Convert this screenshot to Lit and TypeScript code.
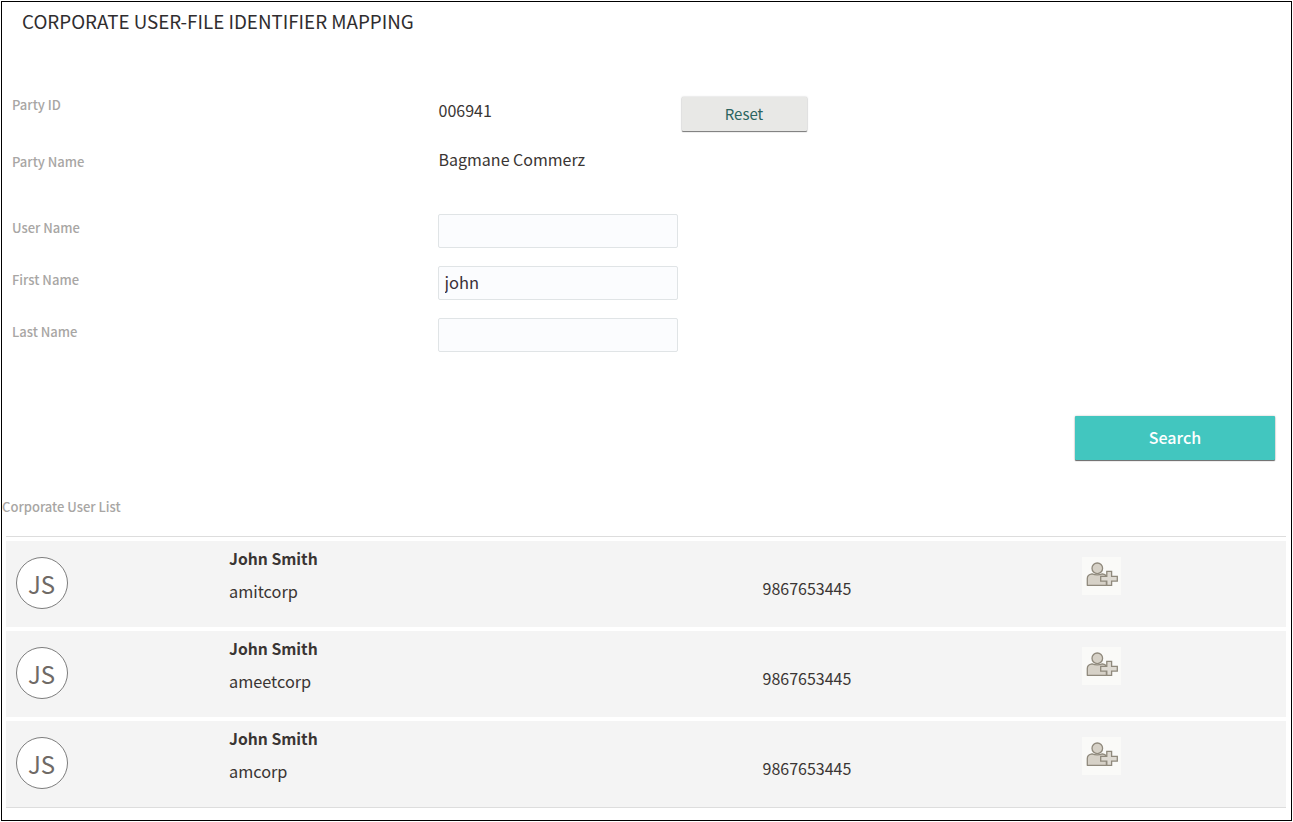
import { LitElement, html, css, svg } from 'lit';
import { customElement } from 'lit/decorators.js';

const users = [
  { name: 'John Smith', login: 'amitcorp', phone: '9867653445' },
  { name: 'John Smith', login: 'ameetcorp', phone: '9867653445' },
  { name: 'John Smith', login: 'amcorp', phone: '9867653445' },
];

const addUserIcon = svg`
  <svg class="add-icon" viewBox="0 0 39 38" width="39" height="38">
    <circle cx="15.300" cy="11.300" r="5.300" fill="#d6d1c7" stroke="#8f897c" stroke-width="1.300"></circle>
    <path d="M5.300 28.300v-6.800c0-2.600 2-4.300 4.700-4.700 3.400 1.300 7 1.300 10.400 0 1.800.3 3.100 1 4 2.200v9.300z" fill="#d6d1c7" stroke="#8f897c" stroke-width="1.300" stroke-linejoin="round"></path>
    <path d="M24.800 14.300h4.800v5h5.700v4.800h-5.700v4.200h-4.800v-4.200h-6.100v-4.800h6.100z" fill="#dedad2" stroke="#8f897c" stroke-width="1.300"></path>
  </svg>`;

@customElement('app-root')
export class AppRoot extends LitElement {
  static styles = css`
    :host {
      display: block;
      font-family: "Noto Sans CJK SC", "Source Sans Pro", "Noto Sans", sans-serif;
      color: #3a3533;
    }

    .frame {
      box-sizing: border-box;
      width: 1291px;
      height: 820px;
      margin: 1px 0 0 1px;
      border: 1px solid #000;
      background: #fff;
    }

    .title {
      margin: 0;
      padding: 4px 0 0 20px;
      height: 29px;
      font-size: 18.800px;
      line-height: 29px;
      font-weight: 400;
      color: #2f2d2f;
    }

    .form {
      display: grid;
      grid-template-columns: 436px 243px 126px;
      padding-top: 58px;
    }

    .label {
      padding-left: 10px;
      font-size: 13px;
      line-height: 20px;
      font-weight: 500;
      color: #a8a6a4;
    }

    .value {
      padding-left: 0.500px;
      font-size: 16px;
      line-height: 24px;
    }

    .reset {
      box-sizing: border-box;
      display: block;
      width: 125px;
      height: 34px;
      margin: 4px 0 0 1px;
      padding: 0 1px 2px 0;
      border: 0;
      border-radius: 1px;
      background: #e8e8e6;
      box-shadow: 0 1px 1px #777, 0 0 2px #bbb;
      font: inherit;
      font-size: 15px;
      color: #2b6460;
    }

    .party-id { height: 57px; }
    .party-id .label { margin-top: 2px; }
    .party-id .value { margin-top: 5px; }
    .party-name { height: 64px; }
    .party-name .label { margin-top: 2px; }
    .party-name .value { margin-top: -3px; }

    .row { display: contents; }
    .field-row .label { margin-top: 4px; }
    .field-row .cell { height: 52px; }

    .input {
      box-sizing: border-box;
      display: block;
      width: 240px;
      height: 34px;
      padding: 0 5.500px 2px;
      border: 1px solid #e0e4e6;
      border-radius: 2px;
      background: #fbfcfe;
      font: inherit;
      font-size: 16.500px;
      color: #3a3039;
      outline: none;
    }

    .actions {
      display: flex;
      justify-content: flex-end;
      padding: 46px 16px 0 0;
    }

    .search {
      width: 200px;
      height: 44px;
      padding: 0 0 2px;
      border: 0;
      border-radius: 1px;
      background: #42c6bf;
      box-shadow: 0 1px 1px #666, 0 0 2px #bbb;
      font: inherit;
      font-size: 16px;
      font-weight: 500;
      color: #fff;
    }

    .list-title {
      margin: 0;
      padding-top: 37px;
      font-size: 13px;
      line-height: 20px;
      font-weight: 500;
      color: #a8a6a4;
    }

    .list {
      margin: 19px 5px 0 4px;
      border-top: 1px solid #dddddd;
      padding-top: 4px;
    }

    .user {
      display: grid;
      grid-template-columns: 223px 533.500px 319.500px 1fr;
      height: 86px;
      background: #f4f4f4;
      margin-bottom: 4px;
    }

    .user:last-child {
      margin-bottom: 0;
      box-shadow: 0 1px 0 #dddddd;
    }

    .avatar {
      box-sizing: border-box;
      width: 52px;
      height: 52px;
      margin: 16px 0 0 10px;
      padding-right: 1px;
      border: 1px solid #7d7d7d;
      border-radius: 50%;
      background: #fff;
      display: flex;
      align-items: center;
      justify-content: center;
      font-size: 24px;
      color: #6f6a66;
    }

    .name {
      padding-top: 6px;
      font-size: 15.700px;
      line-height: 24px;
      font-weight: 700;
    }

    .login {
      padding-top: 8px;
      font-size: 16.300px;
      line-height: 24px;
    }

    .phone {
      padding-top: 35px;
      font-size: 16px;
      line-height: 24px;
    }

    .tool { padding-top: 16px; }

    .tile {
      width: 39px;
      height: 38px;
      background: #fafaf8;
    }

    .add-icon { display: block; }
  `;

  render() {
    return html`
      <div class="frame">
        <h1 class="title">CORPORATE USER-FILE IDENTIFIER MAPPING</h1>

        <div class="form">
          <div class="row">
            <div class="party-id"><div class="label">Party ID</div></div>
            <div class="party-id"><div class="value">006941</div></div>
            <div class="party-id"><button class="reset">Reset</button></div>
          </div>
          <div class="row">
            <div class="party-name"><div class="label">Party Name</div></div>
            <div class="party-name"><div class="value">Bagmane Commerz</div></div>
            <div class="party-name"></div>
          </div>
          ${[
            ['User Name', ''],
            ['First Name', 'john'],
            ['Last Name', ''],
          ].map(([label, value]) => html`
            <div class="row field-row">
              <div class="cell"><div class="label">${label}</div></div>
              <div class="cell"><input class="input" .value=${value} /></div>
              <div class="cell"></div>
            </div>
          `)}
        </div>

        <div class="actions"><button class="search">Search</button></div>

        <h2 class="list-title">Corporate User List</h2>

        <div class="list">
          ${users.map(u => html`
            <div class="user">
              <div><div class="avatar">JS</div></div>
              <div>
                <div class="name">${u.name}</div>
                <div class="login">${u.login}</div>
              </div>
              <div class="phone">${u.phone}</div>
              <div class="tool"><div class="tile">${addUserIcon}</div></div>
            </div>
          `)}
        </div>
      </div>
    `;
  }
}
